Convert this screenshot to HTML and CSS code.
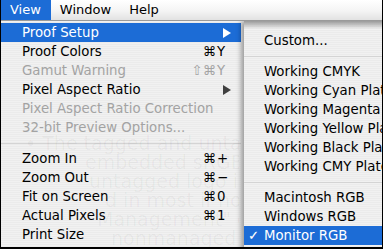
FILE: index.html
```html
<!DOCTYPE html>
<html>
<head>
<meta charset="utf-8">
<link rel="stylesheet" href="styles.css">
</head>
<body>
<div class="screen">
  <div class="menubar">
    <span class="mb-item active">View</span>
    <span class="mb-item">Window</span>
    <span class="mb-item">Help</span>
  </div>
  <div class="ghost">
    <p class="g1">• The tagged and untagged</p>
    <p class="g2">embedded sRGB profile</p>
    <p class="g3">untagged logo is</p>
    <p class="g4">d in most if not all</p>
    <p class="g5">Management" enabled</p>
    <p class="g6">nonmanaged Web</p>
  </div>
  <div class="menu main">
    <div class="item hl"><span class="label">Proof Setup</span><span class="arrow"></span></div>
    <div class="item"><span class="label">Proof Colors</span><span class="sc"><span class="mod">⌘</span><span class="key">Y</span></span></div>
    <div class="item dis"><span class="label">Gamut Warning</span><span class="sc"><span class="mod">⇧⌘</span><span class="key">Y</span></span></div>
    <div class="item"><span class="label">Pixel Aspect Ratio</span><span class="arrow"></span></div>
    <div class="item dis"><span class="label">Pixel Aspect Ratio Correction</span></div>
    <div class="item dis"><span class="label">32-bit Preview Options...</span></div>
    <div class="sep"></div>
    <div class="item"><span class="label">Zoom In</span><span class="sc"><span class="mod">⌘</span><span class="key">+</span></span></div>
    <div class="item"><span class="label">Zoom Out</span><span class="sc"><span class="mod">⌘</span><span class="key">−</span></span></div>
    <div class="item"><span class="label">Fit on Screen</span><span class="sc"><span class="mod">⌘</span><span class="key">0</span></span></div>
    <div class="item"><span class="label">Actual Pixels</span><span class="sc"><span class="mod">⌘</span><span class="key">1</span></span></div>
    <div class="item"><span class="label">Print Size</span></div>
  </div>
  <div class="menu sub">
    <div class="item"><span class="label">Custom...</span></div>
    <div class="sep"></div>
    <div class="item"><span class="label">Working CMYK</span></div>
    <div class="item"><span class="label">Working Cyan Plate</span></div>
    <div class="item"><span class="label">Working Magenta Plate</span></div>
    <div class="item"><span class="label">Working Yellow Plate</span></div>
    <div class="item"><span class="label">Working Black Plate</span></div>
    <div class="item"><span class="label">Working CMY Plates</span></div>
    <div class="sep"></div>
    <div class="item"><span class="label">Macintosh RGB</span></div>
    <div class="item"><span class="label">Windows RGB</span></div>
    <div class="item hl"><span class="check">✓</span><span class="label">Monitor RGB</span></div>
  </div>
</div>
</body>
</html>
```

FILE: styles.css
```css
html, body {
  margin: 0;
  padding: 0;
  background: #fff;
}

.screen {
  position: relative;
  width: 383px;
  height: 249px;
  overflow: hidden;
  box-sizing: border-box;
  border-left: 1px solid #000;
  border-right: 1px solid #000;
  border-bottom: 2px solid #000;
  background: #eeeeee;
  font-family: "DejaVu Sans", Verdana, sans-serif;
  font-size: 13.3px;
  color: #000;
}

.menubar {
  position: relative;
  z-index: 3;
  display: flex;
  height: 20px;
  line-height: 20px;
  background: linear-gradient(#ffffff, #f4f4f4 55%, #e2e2e2);
  border-bottom: 1px solid #9a9a9a;
  font-size: 13px;
}

.mb-item {
  padding: 0 9px;
}

.mb-item.active {
  padding: 0 10px 0 9px;
  background: #1c6cd6;
  color: #fff;
}

.ghost {
  position: absolute;
  z-index: 2;
  left: 0;
  top: 134px;
  width: 238px;
  overflow: hidden;
  pointer-events: none;
  font-size: 19px;
  line-height: 19px;
  color: rgba(0, 0, 0, 0.045);
}

.ghost p {
  margin: 0;
  white-space: nowrap;
}

.g1 { padding-left: 24px; }
.g2 { padding-left: 84px; }
.g3 { padding-left: 88px; }
.g4 { padding-left: 104px; }
.g5 { padding-left: 96px; }
.g6 { padding-left: 110px; }

.menu {
  position: absolute;
  z-index: 1;
  top: 21px;
  background: repeating-linear-gradient(#f1f1f1 0 1px, #ebebeb 1px 2px);
}

.main {
  left: 0;
  width: 240px;
  padding-top: 2px;
  height: 240px;
}

.sub {
  left: 243px;
  width: 150px;
  padding-top: 10px;
  height: 240px;
  box-shadow: -3px 0 5px rgba(0, 0, 0, 0.35);
  background:
    linear-gradient(#9a9a9a, rgba(236, 236, 236, 0) 8px),
    repeating-linear-gradient(#f1f1f1 0 1px, #ebebeb 1px 2px);
}

.item {
  display: flex;
  align-items: center;
  height: 19px;
  padding-left: 21px;
  white-space: nowrap;
}

.sub .item {
  padding-left: 20px;
}

.item .label {
  flex: 1;
}

.item.hl {
  position: relative;
  z-index: 3;
  background: #1c6cd6;
  color: #fff;
}

.item.dis {
  color: #a3a3a3;
}

.sc {
  display: flex;
  margin-right: 13px;
}

.mod {
  text-align: right;
}

.key {
  width: 11px;
  padding-left: 1px;
  text-align: left;
}

.arrow {
  width: 0;
  height: 0;
  margin-right: 10px;
  border-top: 5px solid transparent;
  border-bottom: 5px solid transparent;
  border-left: 8px solid #404040;
}

.hl .arrow {
  border-left-color: #fff;
}

.check {
  position: absolute;
  left: 4px;
}

.sep {
  height: 12px;
  display: flex;
  align-items: center;
}

.sep::after {
  content: "";
  flex: 1;
  height: 1px;
  background: #d4d4d4;
}
```
